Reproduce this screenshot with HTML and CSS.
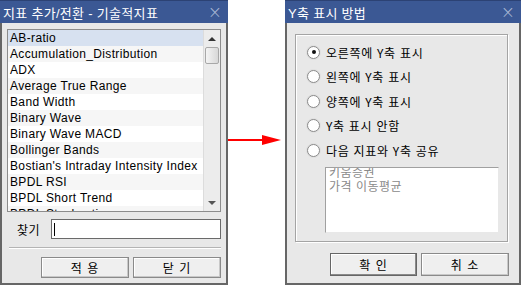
FILE: index.html
```html
<!DOCTYPE html>
<html lang="ko">
<head>
    <meta charset="UTF-8">
    <title>지표 추가/전환</title>
    <link rel="stylesheet" href="styles.css">
</head>
<body>
<div class="screen">
    <div class="window left-win">
        <div class="titlebar">
            <span class="title">지표 추가/전환 - 기술적지표</span>
            <span class="close">×</span>
        </div>
        <div class="win-body">
            <div class="listbox">
                <div class="rows">
                    <div class="row selected">AB-ratio</div>
                    <div class="row alt">Accumulation_Distribution</div>
                    <div class="row">ADX</div>
                    <div class="row alt">Average True Range</div>
                    <div class="row">Band Width</div>
                    <div class="row alt">Binary Wave</div>
                    <div class="row">Binary Wave MACD</div>
                    <div class="row alt">Bollinger Bands</div>
                    <div class="row">Bostian's Intraday Intensity Index</div>
                    <div class="row alt">BPDL RSI</div>
                    <div class="row">BPDL Short Trend</div>
                    <div class="row alt">BPDL Stochastic</div>
                </div>
                <div class="scrollbar">
                    <div class="arrow up"></div>
                    <div class="thumb"></div>
                    <div class="track"></div>
                    <div class="arrow down"></div>
                </div>
            </div>
            <div class="search">
                <span class="search-label">찾기</span>
                <div class="search-input"><span class="caret"></span></div>
            </div>
            <div class="separator"></div>
            <div class="buttons">
                <button class="btn wide">적 용</button>
                <button class="btn wide">닫 기</button>
            </div>
        </div>
    </div>

    <div class="connector">
        <svg width="57" height="20" viewBox="0 0 57 20">
            <line x1="0" y1="10" x2="36" y2="10" stroke="#ff0000" stroke-width="2"/>
            <polygon points="34,5 53,10 34,15" fill="#ff0000"/>
        </svg>
    </div>

    <div class="window right-win">
        <div class="titlebar">
            <span class="title">Y축 표시 방법</span>
            <span class="close">×</span>
        </div>
        <div class="win-body">
            <div class="groupbox">
                <label class="radio"><span class="dot checked"></span>오른쪽에 Y축 표시</label>
                <label class="radio"><span class="dot"></span>왼쪽에 Y축 표시</label>
                <label class="radio"><span class="dot"></span>양쪽에 Y축 표시</label>
                <label class="radio"><span class="dot"></span>Y축 표시 안함</label>
                <label class="radio"><span class="dot"></span>다음 지표와 Y축 공유</label>
                <div class="share-list">
                    <div class="share-text">
                        <div>키움증권</div>
                        <div>가격 이동평균</div>
                    </div>
                </div>
            </div>
            <div class="buttons right-buttons">
                <button class="btn default">확 인</button>
                <button class="btn">취 소</button>
            </div>
        </div>
    </div>
</div>
</body>
</html>
```

FILE: styles.css
```css
body {
    margin: 0;
    background: #fff;
    font-family: "Liberation Sans", "Noto Sans CJK KR", sans-serif;
    font-size: 12px;
    color: #000;
}
.screen {
    display: flex;
    width: 521px;
    height: 288px;
    overflow: hidden;
}
.window {
    background: #e8e8e8;
    border: 2px solid #666;
    border-top: none;
    box-sizing: border-box;
}
.left-win {
    width: 229px;
    height: 285px;
}
.right-win {
    width: 237px;
    height: 285px;
}
.titlebar {
    height: 22px;
    background: #3b5894;
    color: #fff;
    display: flex;
    align-items: center;
    justify-content: space-between;
    padding: 0 6px 0 3px;
    margin: 0 -2px;
    border-top: 1px solid #2c4274;
}
.title {
    font-size: 13px;
    letter-spacing: 0.3px;
}
.close {
    color: #aab8d6;
    font-size: 17px;
    font-family: "DejaVu Sans", sans-serif;
    font-weight: 200;
}
.win-body {
    padding: 6px 5px 0 5px;
}

/* left dialog */
.listbox {
    display: flex;
    width: 214px;
    height: 183px;
    border: 1px solid #8c8c8c;
    box-sizing: border-box;
    background: #fff;
    overflow: hidden;
}
.rows {
    flex: 1;
    overflow: hidden;
}
.row {
    height: 16px;
    line-height: 16px;
    padding-left: 2px;
    white-space: nowrap;
    letter-spacing: 0.35px;
}
.row.alt {
    background: #f6f6f6;
}
.row.selected {
    background: #d7e1f0;
}
.scrollbar {
    width: 16px;
    background: #ececec;
    border-left: 1px solid #dcdcdc;
    display: flex;
    flex-direction: column;
}
.arrow {
    height: 17px;
    display: flex;
    align-items: center;
    justify-content: center;
}
.arrow::before {
    content: "";
    border-left: 4px solid transparent;
    border-right: 4px solid transparent;
}
.arrow.up::before {
    border-bottom: 4px solid #333;
}
.arrow.down::before {
    border-top: 4px solid #555;
}
.thumb {
    height: 15px;
    margin: 0 1px;
    background: linear-gradient(to right, #f4f4f4, #d8d8d8);
    border: 1px solid #a8a8a8;
    border-radius: 2px;
}
.track {
    flex: 1;
}
.search {
    display: flex;
    align-items: center;
    margin-top: 7px;
}
.search-label {
    width: 44px;
    padding-left: 10px;
    box-sizing: border-box;
    font-family: "Noto Sans CJK KR", sans-serif;
    letter-spacing: 0.5px;
}
.search-input {
    width: 170px;
    height: 20px;
    background: #fff;
    border: 1px solid #6a6a6a;
    box-sizing: border-box;
    display: flex;
    align-items: center;
    padding-left: 2px;
}
.caret {
    width: 1px;
    height: 13px;
    background: #000;
}
.separator {
    margin: 8px 0 0 2px;
    width: 212px;
    border-top: 1px solid #b4b4b4;
    border-bottom: 1px solid #fff;
}
.buttons {
    display: flex;
    justify-content: flex-end;
    gap: 4px;
    margin-top: 8px;
    width: 214px;
}
.btn {
    font-family: "Noto Sans CJK KR", sans-serif;
    font-size: 12px;
    letter-spacing: 1px;
    background: #efefef;
    border: 1px solid #8a8a8a;
    box-shadow: inset -1px -1px 0 #c8c8c8, inset 1px 1px 0 #fff;
    height: 21px;
    width: 88px;
    padding: 0;
    color: #000;
}

/* arrow between dialogs */
.connector {
    width: 57px;
    display: flex;
    align-items: flex-start;
    padding-top: 130px;
    box-sizing: border-box;
}

/* right dialog */
.right-win .win-body {
    padding: 11px 10px 0 8px;
}
.groupbox {
    width: 213px;
    height: 208px;
    box-sizing: border-box;
    border: 1px solid #a4a4a4;
    box-shadow: inset 1px 1px 0 #fff, 1px 1px 0 #fff;
    padding: 5px 0 0 11px;
    display: flex;
    flex-direction: column;
}
.radio {
    display: flex;
    align-items: center;
    height: 24.5px;
    font-family: "Noto Sans CJK KR", sans-serif;
    letter-spacing: 0.7px;
}
.dot {
    width: 11px;
    height: 11px;
    border-radius: 50%;
    border: 1px solid #8a8a8a;
    background: #fff;
    margin-right: 6px;
    display: flex;
    align-items: center;
    justify-content: center;
    box-shadow: 0 0 0 1px #e0e0e0;
}
.dot.checked::after {
    content: "";
    width: 4px;
    height: 4px;
    border-radius: 50%;
    background: #111;
}
.share-list {
    margin: 4px 0 0 18px;
    width: 174px;
    height: 66px;
    background: #fff;
    border: 1px solid #a0a0a0;
    border-right-color: #e8e8e8;
    border-bottom-color: #e8e8e8;
    box-sizing: border-box;
    overflow: hidden;
}
.share-text {
    margin-top: -3px;
    padding-left: 3px;
    color: #8a8a8a;
    line-height: 14px;
    letter-spacing: 0.5px;
    font-family: "Noto Sans CJK KR", sans-serif;
}
.right-buttons {
    width: 214px;
    margin-top: 11px;
}
.right-buttons .btn {
    height: 23px;
}
.btn.default {
    width: 87px;
    border-color: #666;
    box-shadow: inset -1px -1px 0 #8a8a8a, inset 1px 1px 0 #fff;
}
```
